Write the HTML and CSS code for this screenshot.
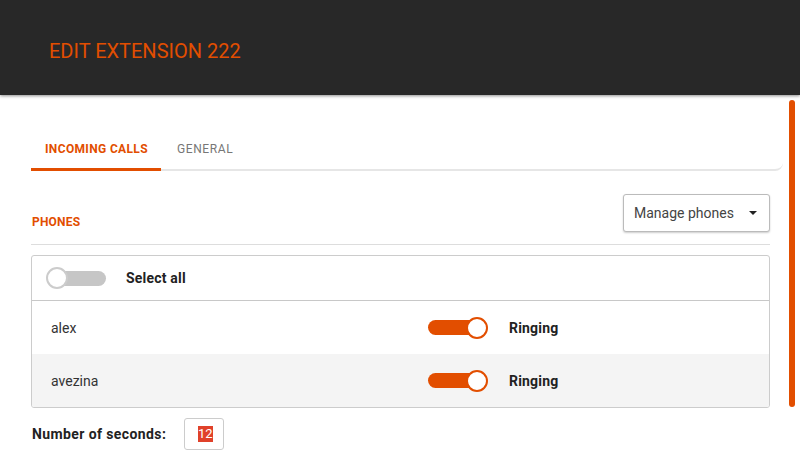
FILE: index.html
```html
<!DOCTYPE html>
<html lang="en">
<head>
    <meta charset="UTF-8">
    <meta name="viewport" content="width=device-width, initial-scale=1.0">
    <title>Edit Extension 222</title>
    <link rel="stylesheet" href="styles.css">
</head>
<body>
    <header class="topbar">
        <h1>EDIT EXTENSION 222</h1>
    </header>

    <div class="page">
        <div class="panel">
            <nav class="tabs">
                <a class="tab active">INCOMING CALLS</a>
                <a class="tab">GENERAL</a>
            </nav>

            <div class="section">
                <div class="section-head">
                    <h2>PHONES</h2>
                    <button class="dropdown">Manage phones <span class="caret"></span></button>
                </div>

                <div class="phones">
                    <div class="phones-head">
                        <span class="toggle off"><span class="knob"></span></span>
                        <span class="label">Select all</span>
                    </div>
                    <div class="phone-row">
                        <span class="name">alex</span>
                        <span class="toggle on"><span class="knob"></span></span>
                        <span class="label">Ringing</span>
                    </div>
                    <div class="phone-row alt">
                        <span class="name">avezina</span>
                        <span class="toggle on"><span class="knob"></span></span>
                        <span class="label">Ringing</span>
                    </div>
                </div>

                <div class="seconds">
                    <label for="seconds">Number of seconds:</label>
                    <div class="num-box"><span class="selected">12</span></div>
                </div>
            </div>
        </div>
        <div class="scrollbar"></div>
    </div>
</body>
</html>
```

FILE: styles.css
```css
body {
    margin: 0;
    font-family: Roboto, "Liberation Sans", sans-serif;
    background-color: #fff;
    color: #333;
    overflow: hidden;
}

.topbar {
    height: 95px;
    background-color: #282828;
    box-shadow: 0 1px 3px rgba(0, 0, 0, 0.45);
    display: flex;
    align-items: center;
    padding-left: 49px;
    position: relative;
}

.topbar h1 {
    margin: 0;
    font-size: 20px;
    font-weight: 400;
    color: #e24e00;
    padding-top: 6px;
}

.page {
    display: flex;
}

.panel {
    margin-left: 31px;
    width: 752px;
}

.scrollbar {
    width: 6px;
    height: 307px;
    margin-top: 5px;
    margin-left: 6px;
    border-radius: 3px;
    background-color: #e24e00;
}

/* tabs */
.tabs {
    display: flex;
    margin-top: 34px;
    border-bottom: 2px solid #e6e6e6;
    border-bottom-right-radius: 8px;
}

.tab {
    font-size: 12px;
    font-weight: 400;
    color: #777;
    padding: 13px 16px 12px;
    margin-bottom: -2px;
    border-bottom: 3px solid transparent;
    letter-spacing: 0.6px;
}

.tab.active {
    color: #e24e00;
    font-weight: 700;
    letter-spacing: 0.35px;
    padding-left: 14px;
    padding-right: 13px;
    border-bottom-color: #e24e00;
}

/* section */
.section {
    margin-right: 13px;
}

.section-head {
    display: flex;
    justify-content: space-between;
    margin-top: 23px;
    padding-bottom: 12px;
    border-bottom: 1px solid #ddd;
}

.section-head h2 {
    align-self: flex-end;
    margin: 0 0 2px 1px;
    font-size: 12px;
    font-weight: 700;
    color: #e24e00;
    line-height: 16px;
    letter-spacing: 0.2px;
}

.dropdown {
    width: 147px;
    height: 38px;
    border: 1px solid #bbb;
    border-radius: 3px;
    background-color: #fff;
    box-shadow: 0 1px 2px rgba(0, 0, 0, 0.2);
    font-family: inherit;
    font-size: 14px;
    color: #444;
    display: flex;
    align-items: center;
    justify-content: space-between;
    padding: 0 12px 0 10px;
}

.caret {
    width: 0;
    height: 0;
    border-left: 4px solid transparent;
    border-right: 4px solid transparent;
    border-top: 4px solid #222;
}

/* phones list */
.phones {
    margin-top: 10px;
    border: 1px solid #ccc;
    border-radius: 3px;
    overflow: hidden;
}

.phones-head {
    display: flex;
    align-items: center;
    height: 44px;
    padding-left: 14px;
    border-bottom: 1px solid #c8c8c8;
}

.phones-head .label {
    margin-left: 20px;
}

.phone-row {
    display: flex;
    align-items: center;
    height: 53px;
    padding-left: 19px;
}

.phone-row.alt {
    background-color: #f4f4f4;
}

.phone-row .name {
    width: 377px;
    font-size: 14px;
    color: #333;
}

.phone-row .label {
    margin-left: 21px;
}

.label {
    font-size: 14px;
    font-weight: 700;
    color: #222;
    letter-spacing: 0.2px;
}

.toggle {
    position: relative;
    width: 60px;
    height: 22px;
    display: flex;
    align-items: center;
}

.toggle::before {
    content: "";
    display: block;
    height: 15px;
    width: 56px;
    border-radius: 8px;
}

.toggle.off::before {
    background-color: #c6c6c6;
    margin-left: 4px;
}

.toggle.on::before {
    background-color: #e24e00;
}

.knob {
    position: absolute;
    top: 0;
    width: 18px;
    height: 18px;
    border-radius: 50%;
    background-color: #fff;
    border: 2px solid #ccc;
}

.toggle.off .knob {
    left: 0;
}

.toggle.on .knob {
    right: 0;
    border-color: #e24e00;
}

/* seconds */
.seconds {
    display: flex;
    align-items: center;
    margin-top: 10px;
    margin-left: 1px;
}

.seconds label {
    width: 152px;
    font-size: 14px;
    font-weight: 700;
    color: #222;
    letter-spacing: 0.4px;
}

.num-box {
    width: 40px;
    height: 32px;
    border: 1px solid #ccc;
    border-radius: 3px;
    display: flex;
    align-items: center;
    padding-left: 13px;
    box-sizing: border-box;
}

.selected {
    background-color: #e0412a;
    color: #fff;
    font-size: 13px;
    line-height: 16px;
}
```
